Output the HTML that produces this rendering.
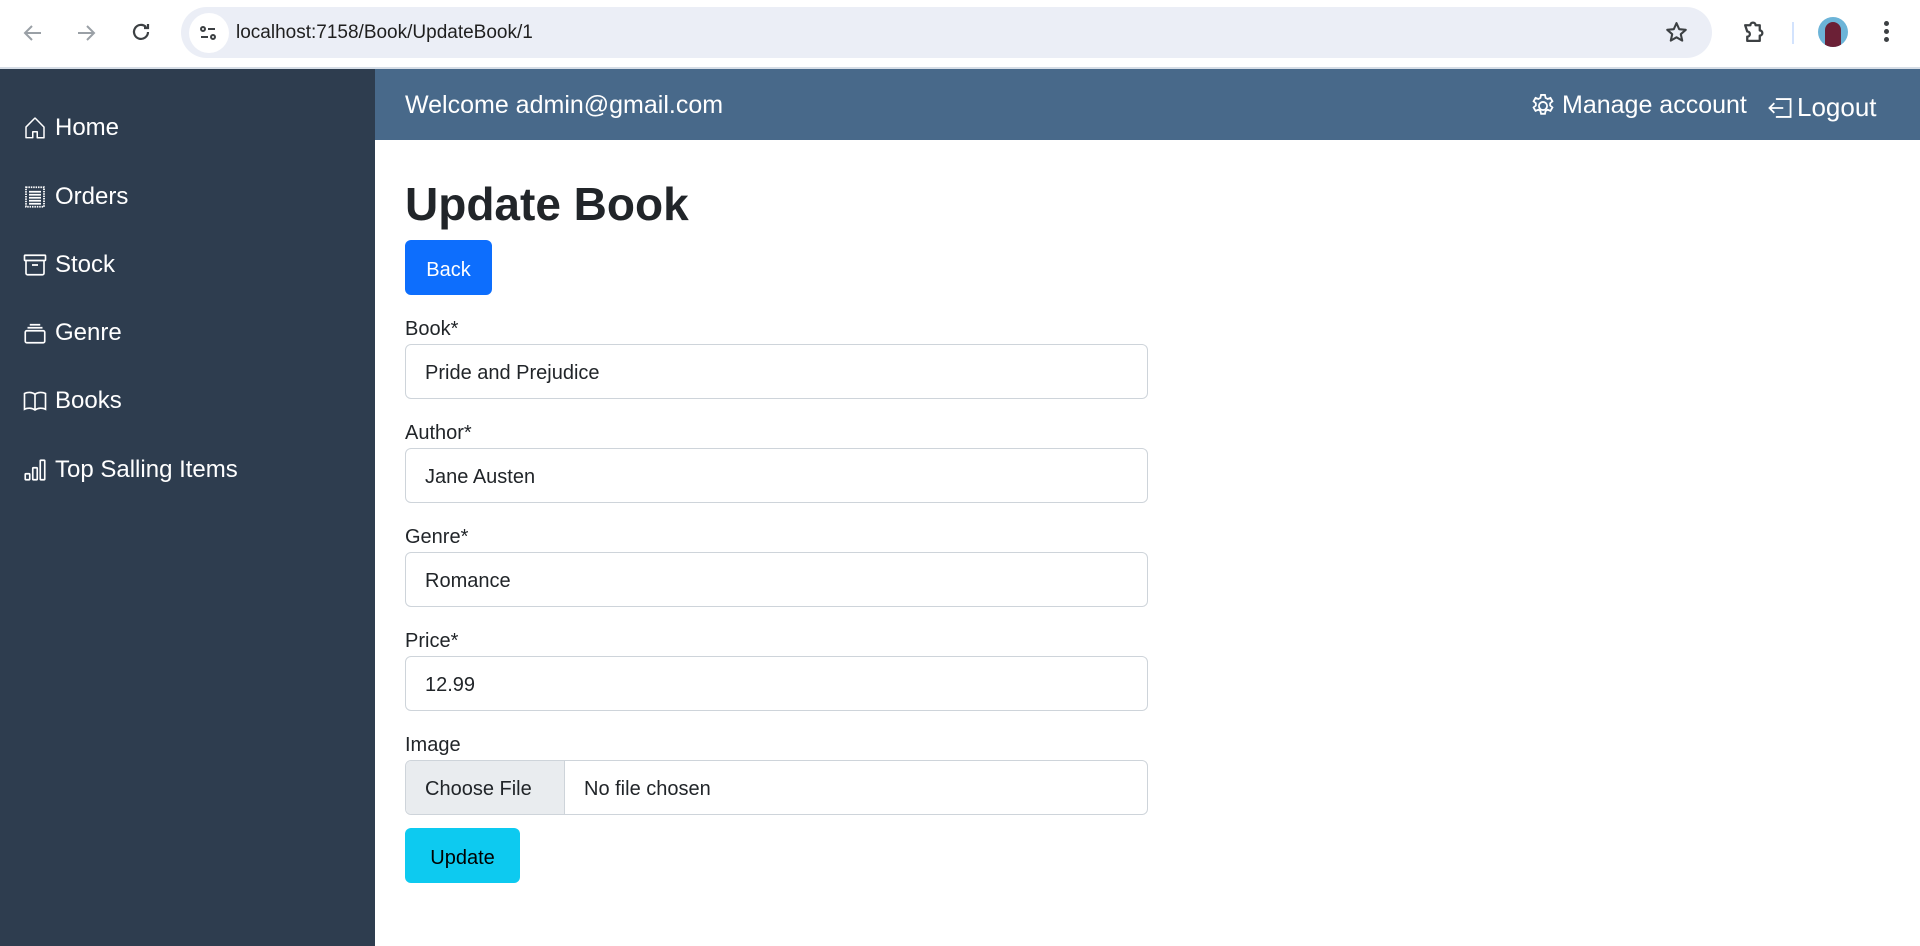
<!DOCTYPE html>
<html><head><meta charset="utf-8"><style>
*{box-sizing:border-box;margin:0;padding:0}
body{width:1920px;height:946px;overflow:hidden;font-family:"Liberation Sans",sans-serif;background:#fff;position:relative;color:#212529}
.chrome{position:absolute;left:0;top:0;width:1920px;height:69px;background:#fff;border-bottom:2px solid #d6dde6}
.addr{position:absolute;left:181px;top:7px;width:1531px;height:51px;border-radius:26px;background:#ebeef6}
.addr .t{position:absolute;left:55px;top:15px;font-size:19px;color:#1f1f1f}
.side{position:absolute;left:0;top:69px;width:375px;height:877px;background:#2e3d4f}
.side .it{position:absolute;left:23px;color:#fff;font-size:24px;display:flex;align-items:center;gap:8px;height:30px}
.side svg{width:24px;height:24px}
.hdr{position:absolute;left:375px;top:69px;width:1545px;height:71px;background:#48698a;color:#fff;font-size:25px}
.lbl{position:absolute;left:405px;font-size:20px}
.inp{position:absolute;left:405px;width:743px;height:55px;border:1px solid #ced4da;border-radius:6px;font-size:20px;padding:17px 19px 0}
.btn{position:absolute;left:405px;border-radius:6px;font-size:20px;text-align:center;line-height:60px;height:55px}
</style></head><body>
<div class="chrome">
<svg style="position:absolute;left:21px;top:21px" width="24" height="24" viewBox="0 0 24 24" fill="none" stroke="#9aa0a6" stroke-width="2"><path d="M20 12H5M11 5l-7 7 7 7"/></svg>
<svg style="position:absolute;left:74px;top:21px" width="24" height="24" viewBox="0 0 24 24" fill="none" stroke="#9aa0a6" stroke-width="2"><path d="M4 12h15M13 5l7 7-7 7"/></svg>
<svg style="position:absolute;left:129px;top:20px" width="24" height="24" viewBox="0 0 24 24" fill="none" stroke="#3c4043" stroke-width="2.2"><path d="M19 12a7 7 0 1 1-2-5M19 4v4h-4"/></svg>
<div class="addr"><div style="position:absolute;left:8px;top:6px;width:40px;height:40px;border-radius:20px;background:#fff"></div>
<svg style="position:absolute;left:15px;top:14px" width="24" height="24" viewBox="0 0 24 24" fill="none" stroke="#3c4043" stroke-width="2"><circle cx="7" cy="8" r="2"/><path d="M12 8h7M5 16h7"/><circle cx="17" cy="16" r="2"/></svg>
<div class="t">localhost:7158/Book/UpdateBook/1</div>
<svg style="position:absolute;left:1483px;top:13px" width="25" height="25" viewBox="0 0 24 24" fill="none" stroke="#3c4043" stroke-width="2" stroke-linejoin="round"><path d="M12 3l2.6 5.8 6.3.6-4.8 4.2 1.4 6.2L12 16.6 6.5 19.8l1.4-6.2L3.1 9.4l6.3-.6z"/></svg>
</div>
<svg style="position:absolute;left:1741px;top:20px" width="25" height="25" viewBox="0 0 24 24" fill="none" stroke="#3c4043" stroke-width="2.2" stroke-linejoin="round"><path d="M4 5h5a2.5 2.5 0 0 1 5 0h4v5a2.5 2.5 0 0 1 0 5v5H6v-4a2.5 2.5 0 0 0 0-5z"/></svg>
<div style="position:absolute;left:1792px;top:22px;width:2px;height:22px;background:#d3e3fd"></div>
<div style="position:absolute;left:1818px;top:17px;width:30px;height:30px;border-radius:15px;background:#6cb4d8;overflow:hidden"><div style="position:absolute;left:7px;top:5px;width:16px;height:26px;border-radius:8px 8px 0 0;background:#6b2036"></div></div>
<div style="position:absolute;left:1884px;top:21px;width:5px;height:5px;border-radius:3px;background:#3c4043;box-shadow:0 8px 0 #3c4043,0 16px 0 #3c4043"></div>
</div>
<div class="side">
<div class="it" style="top:44px"><svg viewBox="0 0 16 16" fill="#fff"><path d="M8.7 1.3a1 1 0 0 0-1.4 0L1.6 7a.5.5 0 0 0-.1.4v7a.5.5 0 0 0 .5.5h4.5a.5.5 0 0 0 .5-.5V11h2v3.5a.5.5 0 0 0 .5.5H14a.5.5 0 0 0 .5-.5v-7a.5.5 0 0 0-.1-.4zM13.5 14H10v-3.5a.5.5 0 0 0-.5-.5h-3a.5.5 0 0 0-.5.5V14H2.5V7.6L8 2l5.5 5.6z"/></svg>Home</div>
<div class="it" style="top:113px"><svg viewBox="0 0 16 16" fill="none" stroke="#fff" stroke-width="1.2"><rect x="2" y="1.5" width="12" height="13" stroke-dasharray="1 .6"/><path d="M4 4.5h8M4 6.5h8M4 8.5h8M4 10.5h8M4 12.5h8"/></svg>Orders</div>
<div class="it" style="top:181px"><svg viewBox="0 0 16 16" fill="none" stroke="#fff" stroke-width="1.1"><rect x="1" y="1.5" width="14" height="3.5" rx=".5"/><path d="M2 5v8.5a1 1 0 0 0 1 1h10a1 1 0 0 0 1-1V5M6 8h4"/></svg>Stock</div>
<div class="it" style="top:249px"><svg viewBox="0 0 16 16" fill="none" stroke="#fff" stroke-width="1.1"><path d="M4.5 2.5h7M3 4.5h10"/><rect x="1.5" y="6.5" width="13" height="8" rx="1"/></svg>Genre</div>
<div class="it" style="top:317px"><svg viewBox="0 0 16 16" fill="none" stroke="#fff" stroke-width="1.1"><path d="M1 3c2-1 5-1 7 .5 2-1.5 5-1.5 7-.5v10.5c-2-1-5-1-7 .5-2-1.5-5-1.5-7-.5zM8 3.5v10.5"/></svg>Books</div>
<div class="it" style="top:386px"><svg viewBox="0 0 16 16" fill="none" stroke="#fff" stroke-width="1.1"><rect x="1.5" y="10.5" width="3" height="4" rx=".5"/><rect x="6.5" y="6.5" width="3" height="8" rx=".5"/><rect x="11.5" y="1.5" width="3" height="13" rx=".5"/></svg>Top Salling Items</div>
</div>
<div class="hdr">
<div style="position:absolute;left:30px;top:22px">Welcome admin@gmail.com</div>
<div style="position:absolute;left:1155px;top:22px;display:flex;align-items:center;gap:6px"><svg width="26" height="26" viewBox="0 0 16 16" fill="none" stroke="#fff" stroke-width="1.1"><circle cx="8" cy="8" r="2.5"/><path d="M6.8 1.2h2.4l.4 1.8 1.3.7 1.7-.7 1.2 2.1-1.4 1.2v1.4l1.4 1.2-1.2 2.1-1.7-.7-1.3.7-.4 1.8H6.8l-.4-1.8-1.3-.7-1.7.7-1.2-2.1 1.4-1.2V6.3L2.2 5.1l1.2-2.1 1.7.7 1.3-.7z"/></svg>Manage account</div>
<div style="position:absolute;left:1392px;top:23px;display:flex;align-items:center;gap:4px;font-size:26px"><svg width="26" height="26" viewBox="0 0 16 16" fill="none" stroke="#fff" stroke-width="1.1"><path d="M6 3V2.5h8.5v11H6V13M10 8H1.5M4.5 5l-3 3 3 3"/></svg>Logout</div>
</div>
<div style="position:absolute;left:405px;top:177px;font-size:46px;font-weight:bold">Update Book</div>
<div class="btn" style="top:240px;width:87px;background:#0d6efd;color:#fff">Back</div>
<div class="lbl" style="top:318px">Book*</div><div class="inp" style="top:344px">Pride and Prejudice</div>
<div class="lbl" style="top:422px">Author*</div><div class="inp" style="top:448px">Jane Austen</div>
<div class="lbl" style="top:526px">Genre*</div><div class="inp" style="top:552px">Romance</div>
<div class="lbl" style="top:630px">Price*</div><div class="inp" style="top:656px">12.99</div>
<div class="lbl" style="top:734px">Image</div>
<div class="inp" style="top:760px;padding:0;overflow:hidden"><div style="position:absolute;left:0;top:0;width:159px;height:53px;background:#e9ecef;border-right:1px solid #ced4da;padding:17px 19px 0">Choose File</div><div style="position:absolute;left:178px;top:17px">No file chosen</div></div>
<div class="btn" style="top:828px;width:115px;background:#0dcaf0;color:#000">Update</div>
</body></html>
